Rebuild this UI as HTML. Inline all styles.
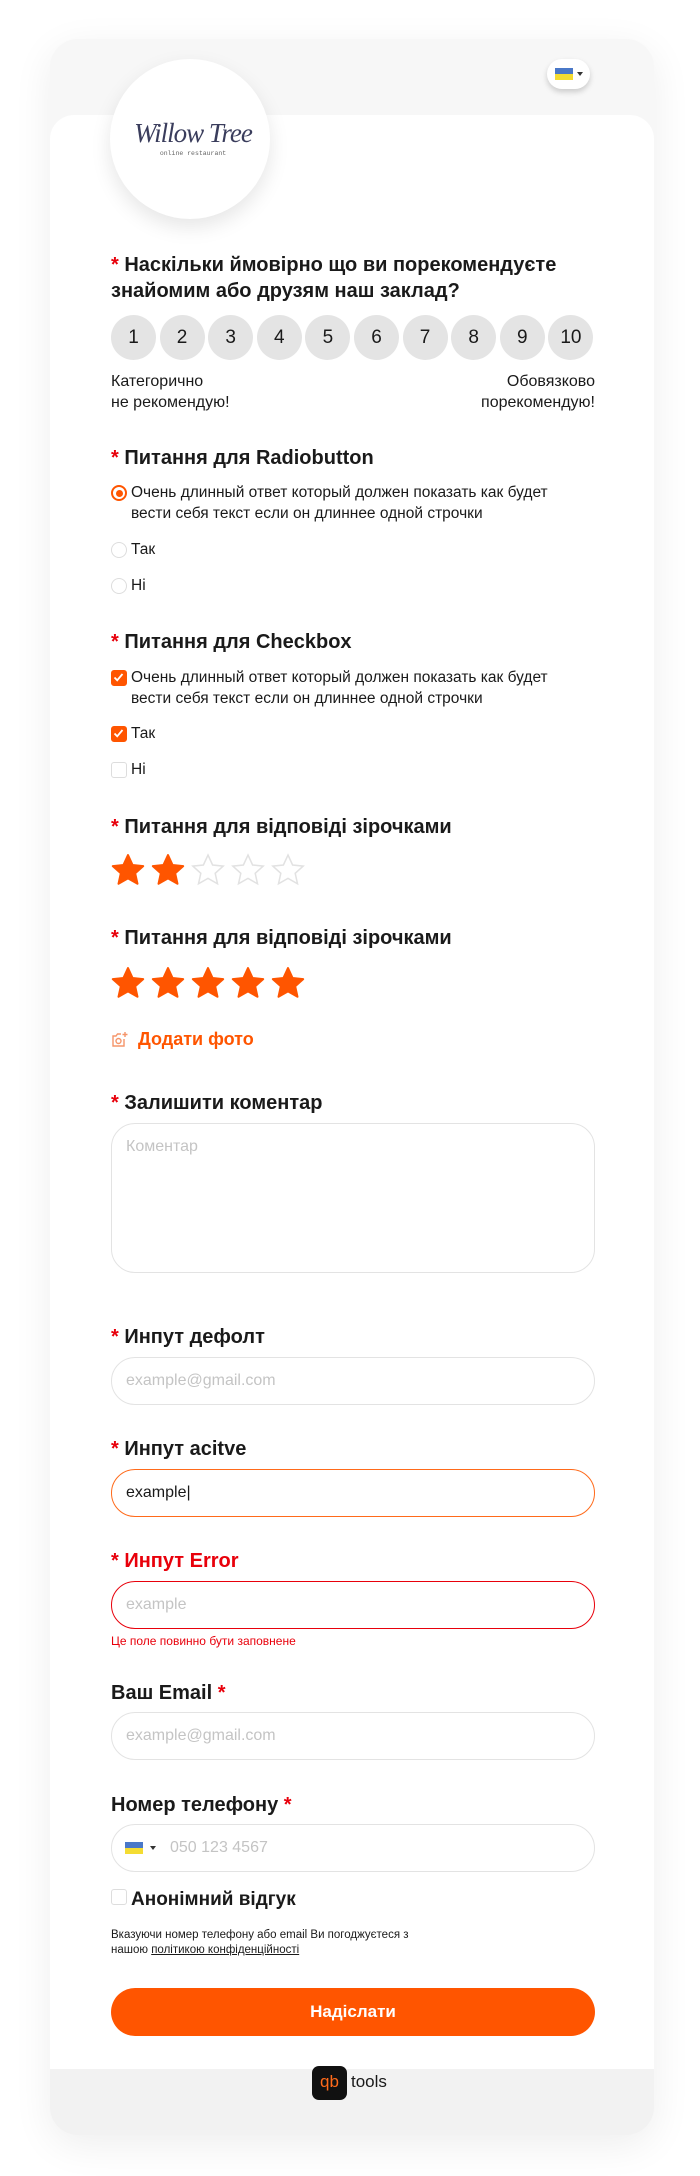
<!DOCTYPE html>
<html><head><meta charset="utf-8"><style>
*{box-sizing:border-box;margin:0;padding:0}
body{width:700px;height:2176px;background:#fff;font-family:"Liberation Sans",sans-serif;color:#1a1a1a;position:relative;overflow:hidden}
.a{position:absolute}
.card{left:50px;top:39px;width:604px;height:2096px;border-radius:28px;background:#f7f7f7;box-shadow:0 10px 40px rgba(0,0,0,.07);overflow:hidden}
.white{left:50px;top:115px;width:604px;height:1955px;background:#fff;border-radius:24px 24px 0 0}
.foot{left:50px;top:2069px;width:604px;height:66px;background:#f2f2f2;border-radius:0 0 28px 28px}
h3{position:absolute;left:111px;font-size:20px;font-weight:bold;line-height:24px;color:#1a1a1a}
h3 .s{color:#e8000b}
.t{position:absolute;font-size:15.5px;line-height:21px}
.num{position:absolute;top:315px;width:45px;height:45px;border-radius:50%;background:#e4e4e4;font-size:19px;text-align:center;line-height:45px}
.inp{position:absolute;left:111px;width:484px;height:48px;border:1.5px solid #e3e3e3;border-radius:24px;font-size:16px;color:#c4c4c4;padding-left:14px;line-height:45px}
.rad{position:absolute;left:111px;width:16px;height:16px;border-radius:50%;border:1.5px solid #ddd}
.cb{position:absolute;left:111px;width:16px;height:16px;border-radius:3px;border:1.5px solid #ddd}
.cbon{background:#ff5500;border-color:#ff5500}
</style></head><body>
<div class="a card"></div>
<div class="a white"></div>
<div class="a foot"></div>
<div class="a" style="left:110px;top:59px;width:160px;height:160px;border-radius:50%;background:#fff;box-shadow:0 8px 20px rgba(0,0,0,.1)"></div>
<div class="a" style="left:118px;top:118px;width:150px;text-align:center;font-family:'Liberation Serif',serif;font-style:italic;font-size:27px;color:#3a3d5c;letter-spacing:-1px">Willow Tree</div>
<div class="a" style="left:118px;top:150px;width:150px;text-align:center;font-family:'Liberation Mono',monospace;font-size:6.5px;color:#666">online restaurant</div>
<div class="a" style="left:547px;top:59px;width:43px;height:30px;border-radius:15px;background:#fff;box-shadow:0 3px 6px rgba(0,0,0,.18)"></div>
<div class="a" style="left:555px;top:68px;width:18px;height:6px;background:#4a78c8"></div>
<div class="a" style="left:555px;top:74px;width:18px;height:6px;background:#f4dc32"></div>
<div class="a" style="left:577px;top:72px;border:3.5px solid transparent;border-top:4px solid #333"></div>

<h3 style="top:252px;width:490px;line-height:26px"><span class="s">*</span> Наскільки ймовірно що ви порекомендуєте знайомим або друзям наш заклад?</h3>
<div class="num" style="left:111px">1</div><div class="num" style="left:159.6px">2</div><div class="num" style="left:208.2px">3</div><div class="num" style="left:256.8px">4</div><div class="num" style="left:305.4px">5</div><div class="num" style="left:354px">6</div><div class="num" style="left:402.6px">7</div><div class="num" style="left:451.2px">8</div><div class="num" style="left:499.8px">9</div><div class="num" style="left:548.4px">10</div>
<div class="t" style="left:111px;top:371px;font-size:16px;line-height:21px">Категорично<br>не рекомендую!</div>
<div class="t" style="left:400px;top:371px;width:195px;text-align:right;font-size:16px;line-height:21px">Обовязково<br>порекомендую!</div>

<h3 style="top:446px"><span class="s">*</span> Питання для Radiobutton</h3>
<div class="rad" style="top:485px;border:2px solid #ff5500"><div style="margin:2.5px;width:7px;height:7px;border-radius:50%;background:#ff5500"></div></div>
<div class="t" style="left:131px;top:482px">Очень длинный ответ который должен показать как будет<br>вести себя текст если он длиннее одной строчки</div>
<div class="rad" style="top:542px"></div><div class="t" style="left:131px;top:539px">Так</div>
<div class="rad" style="top:578px"></div><div class="t" style="left:131px;top:575px">Ні</div>

<h3 style="top:630px"><span class="s">*</span> Питання для Checkbox</h3>
<div class="cb cbon" style="top:670px"><svg width="13" height="13" viewBox="0 0 13 13" style="display:block"><path d="M2.5 6.5l2.7 2.8L10.5 3" stroke="#fff" stroke-width="1.8" fill="none"/></svg></div>
<div class="t" style="left:131px;top:667px">Очень длинный ответ который должен показать как будет<br>вести себя текст если он длиннее одной строчки</div>
<div class="cb cbon" style="top:726px"><svg width="13" height="13" viewBox="0 0 13 13" style="display:block"><path d="M2.5 6.5l2.7 2.8L10.5 3" stroke="#fff" stroke-width="1.8" fill="none"/></svg></div><div class="t" style="left:131px;top:723px">Так</div>
<div class="cb" style="top:762px"></div><div class="t" style="left:131px;top:759px">Ні</div>

<h3 style="top:815px"><span class="s">*</span> Питання для відповіді зірочками</h3>
<svg class="a" style="left:111px;top:853px" width="200" height="38" viewBox="0 0 200 38">
<defs><path id="st" d="M17 2l4.6 10 10.6 1.1-8 7.2 2.3 10.5L17 25.4 7.5 30.8l2.3-10.5-8-7.2L12.4 12z"/></defs>
<use href="#st" fill="#ff5500" stroke="#ff5500" stroke-width="2" stroke-linejoin="round"/>
<use href="#st" x="40" fill="#ff5500" stroke="#ff5500" stroke-width="2" stroke-linejoin="round"/>
<use href="#st" x="80" fill="none" stroke="#e2e2e2" stroke-width="1.5"/>
<use href="#st" x="120" fill="none" stroke="#e2e2e2" stroke-width="1.5"/>
<use href="#st" x="160" fill="none" stroke="#e2e2e2" stroke-width="1.5"/>
</svg>
<h3 style="top:926px"><span class="s">*</span> Питання для відповіді зірочками</h3>
<svg class="a" style="left:111px;top:966px" width="200" height="38" viewBox="0 0 200 38">
<use href="#st" fill="#ff5500" stroke="#ff5500" stroke-width="2" stroke-linejoin="round"/>
<use href="#st" x="40" fill="#ff5500" stroke="#ff5500" stroke-width="2" stroke-linejoin="round"/>
<use href="#st" x="80" fill="#ff5500" stroke="#ff5500" stroke-width="2" stroke-linejoin="round"/>
<use href="#st" x="120" fill="#ff5500" stroke="#ff5500" stroke-width="2" stroke-linejoin="round"/>
<use href="#st" x="160" fill="#ff5500" stroke="#ff5500" stroke-width="2" stroke-linejoin="round"/>
</svg>

<svg class="a" style="left:111px;top:1031px" width="18" height="18" viewBox="0 0 18 18"><path d="M13 8v7H2V5h3l1.5-2H10" stroke="#f5956a" stroke-width="1.4" fill="none"/><circle cx="7.5" cy="10" r="2.5" stroke="#f5956a" stroke-width="1.4" fill="none"/><path d="M14 1v5M11.5 3.5h5" stroke="#f5956a" stroke-width="1.4"/></svg>
<div class="t" style="left:138px;top:1029px;font-size:18px;font-weight:bold;color:#ff5500">Додати фото</div>

<h3 style="top:1091px"><span class="s">*</span> Залишити коментар</h3>
<div class="inp" style="top:1123px;height:150px;border-radius:24px;line-height:20px;padding-top:13px">Коментар</div>

<h3 style="top:1325px"><span class="s">*</span> Инпут дефолт</h3>
<div class="inp" style="top:1357px">example@gmail.com</div>
<h3 style="top:1437px"><span class="s">*</span> Инпут acitve</h3>
<div class="inp" style="top:1469px;border-color:#ff6a1a;color:#1a1a1a">example|</div>
<h3 style="top:1549px;color:#e8000b"><span class="s">*</span> Инпут Error</h3>
<div class="inp" style="top:1581px;border-color:#e8000b">example</div>
<div class="t" style="left:111px;top:1633px;font-size:12px;line-height:16px;color:#e8000b">Це поле повинно бути заповнене</div>

<h3 style="top:1681px">Ваш Email <span class="s">*</span></h3>
<div class="inp" style="top:1712px">example@gmail.com</div>
<h3 style="top:1793px">Номер телефону <span class="s">*</span></h3>
<div class="inp" style="top:1824px;padding-left:58px">050 123 4567</div>
<div class="a" style="left:125px;top:1842px;width:18px;height:6px;background:#4a78c8"></div>
<div class="a" style="left:125px;top:1848px;width:18px;height:6px;background:#f4dc32"></div>
<div class="a" style="left:150px;top:1846px;border:3px solid transparent;border-top:4px solid #333"></div>

<div class="cb" style="top:1889px"></div>
<div class="t" style="left:131px;top:1889px;font-size:19px;font-weight:bold">Анонімний відгук</div>
<div class="t" style="left:111px;top:1928px;font-size:11.5px;line-height:15px">Вказуючи номер телефону або email Ви погоджуєтеся з<br>нашою <u>політикою конфіденційності</u></div>

<div class="a" style="left:111px;top:1988px;width:484px;height:48px;border-radius:24px;background:#ff5500;color:#fff;font-size:17px;font-weight:bold;text-align:center;line-height:48px">Надіслати</div>

<div class="a" style="left:312px;top:2066px;width:35px;height:34px;border-radius:7px;background:#111;color:#ff6a1a;font-size:17px;text-align:center;line-height:31px">qb</div>
<div class="a" style="left:351px;top:2072px;font-size:17px;color:#1a1a1a">tools</div>
</body></html>
